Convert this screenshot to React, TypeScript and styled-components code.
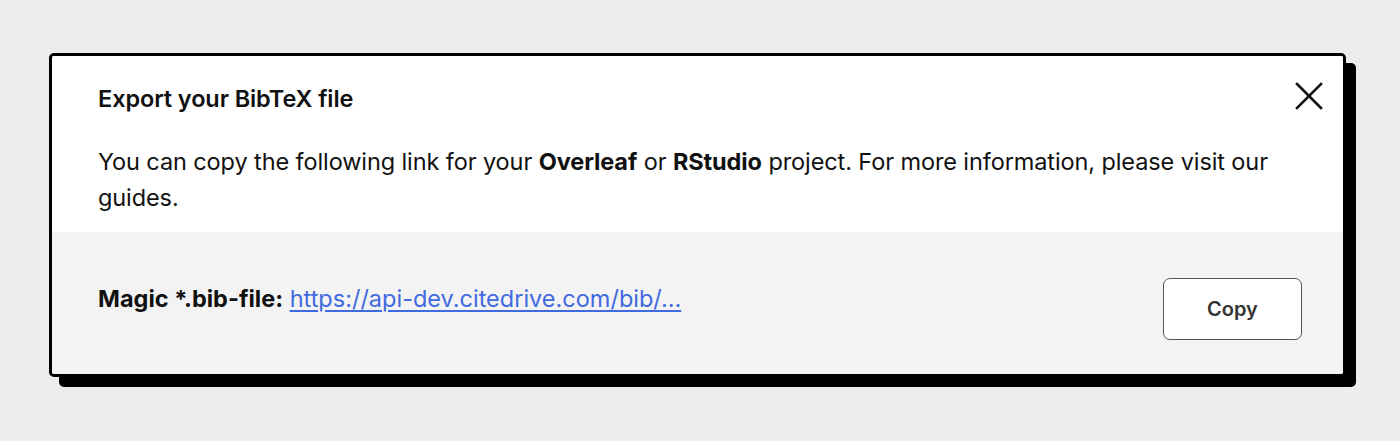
import React, { ReactElement } from "react";
import styled, { createGlobalStyle } from "styled-components";

const GlobalStyle = createGlobalStyle`
  html, body {
    margin: 0;
    padding: 0;
    background-color: #ededed;
    font-family: Inter, "Noto Sans", "Liberation Sans", sans-serif;
    color: #111;
  }
`;

function CloseIcon(): ReactElement {
  return (
    <svg width="28" height="28" viewBox="0 0 28 28" fill="none">
      <path
        d="M2 2L26 26M26 2L2 26"
        stroke="#111"
        strokeWidth="2.6"
        strokeLinecap="square"
      />
    </svg>
  );
}

function App(): ReactElement {
  const link = "https://api-dev.citedrive.com/bib/…";

  return (
    <>
      <GlobalStyle />
      <Page>
        <Card role="dialog" aria-labelledby="export-title">
          <Header>
            <TitleRow>
              <Title id="export-title">Export your BibTeX file</Title>
              <CloseButton aria-label="Close">
                <CloseIcon />
              </CloseButton>
            </TitleRow>
            <Description>
              You can copy the following link for your <strong>Overleaf</strong>{" "}
              or <strong>RStudio</strong> project. For more information, please
              visit our guides.
            </Description>
          </Header>
          <Footer>
            <LinkLine>
              <strong>Magic *.bib-file:</strong>{" "}
              <LinkText href="#">{link}</LinkText>
            </LinkLine>
            <CopyButton>Copy</CopyButton>
          </Footer>
        </Card>
      </Page>
    </>
  );
}

const Page = styled.div`
  padding: 53px 0 0 49px;
  height: 441px;
  box-sizing: border-box;
`;

const Card = styled.div`
  width: 1297px;
  box-sizing: border-box;
  border: 3px solid #000;
  border-radius: 5px;
  background-color: #fff;
  box-shadow: 10px 10px 0 0 #000;
  overflow: hidden;
`;

const Header = styled.div`
  padding: 28px 21px 16px 46px;
  background-color: #fff;
`;

const TitleRow = styled.div`
  display: flex;
  justify-content: space-between;
  align-items: flex-start;
`;

const Title = styled.h2`
  margin: 0;
  font-size: 23.5px;
  line-height: 30px;
  font-weight: 600;
  letter-spacing: -0.1px;
`;

const CloseButton = styled.button`
  display: flex;
  padding: 0;
  margin: -2px -1px 0 0;
  border: none;
  background: transparent;
  cursor: pointer;
`;

const Description = styled.p`
  margin: 30px 0 0;
  padding-right: 20px;
  font-size: 23.5px;
  line-height: 36px;
  font-weight: 400;
  letter-spacing: -0.1px;

  strong {
    font-weight: 700;
  }
`;

const Footer = styled.div`
  display: flex;
  justify-content: space-between;
  align-items: flex-start;
  padding: 46px 41px 34px 46px;
  background-color: #f3f3f3;
`;

const LinkLine = styled.div`
  padding-top: 3px;
  font-size: 23.5px;
  line-height: 36px;

  strong {
    font-weight: 700;
  }
`;

const LinkText = styled.a`
  color: #3f6ae0;
  text-decoration: underline;
  text-underline-offset: 3px;
`;

const CopyButton = styled.button`
  width: 139px;
  height: 62px;
  box-sizing: border-box;
  border: 1.5px solid #555;
  border-radius: 7px;
  background-color: #fff;
  color: #333;
  font-family: Inter, "Noto Sans", "Liberation Sans", sans-serif;
  font-size: 20px;
  font-weight: 600;
  cursor: pointer;
`;

export default App;
